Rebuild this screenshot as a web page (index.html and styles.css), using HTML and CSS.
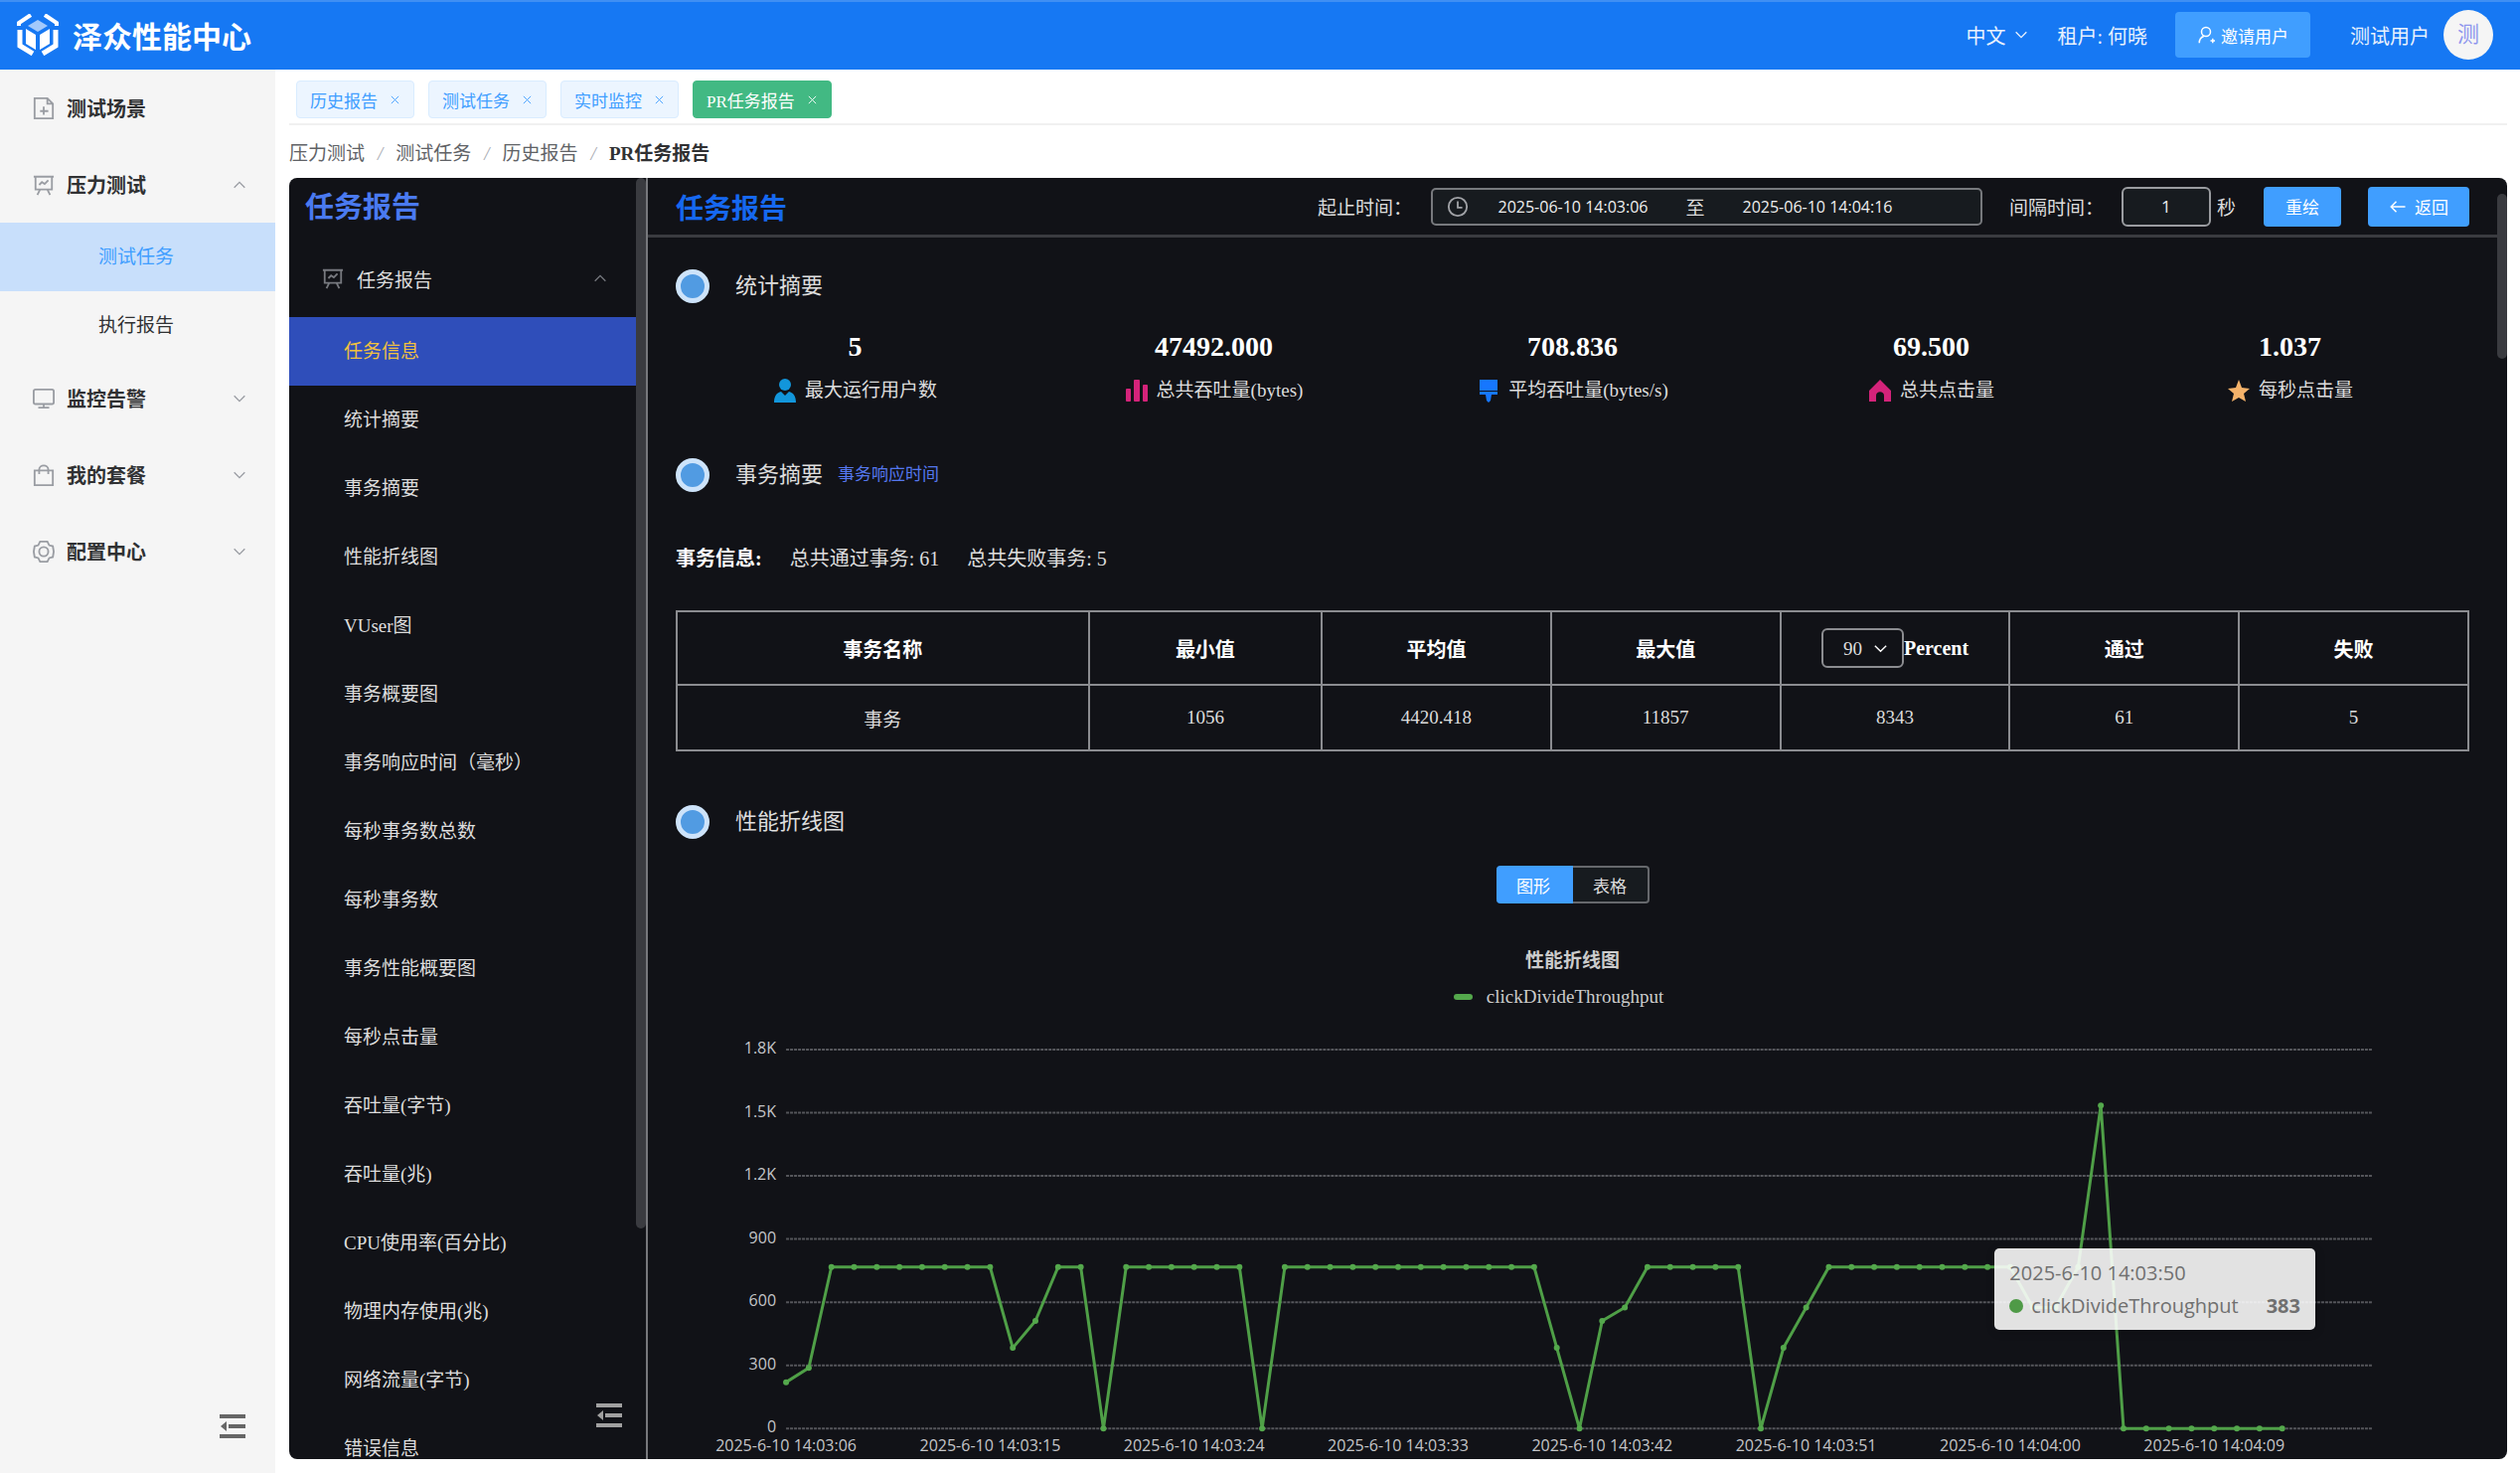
FILE: index.html
```html
<!DOCTYPE html>
<html lang="zh-CN">
<head>
  <meta charset="UTF-8">
  <title>泽众性能中心</title>
  <link rel="stylesheet" href="styles.css">
</head>
<body>

<!-- shared icons -->
<svg class="sprite" aria-hidden="true">
  <symbol id="i-board" viewBox="0 0 24 24">
    <path d="M1 3h22M3 3v14h18V3M8 17l-3 6M16 17l3 6M7 12l3-3 3 2 4-4"/>
  </symbol>
  <symbol id="i-down" viewBox="0 0 24 24"><path d="M4 8l8 8 8-8"/></symbol>
  <symbol id="i-up" viewBox="0 0 24 24"><path d="M4 16l8-8 8 8"/></symbol>
  <symbol id="i-close" viewBox="0 0 24 24"><path d="M4 4l16 16M20 4L4 20"/></symbol>
  <symbol id="i-fold" viewBox="0 0 26 24">
    <path d="M0 2h26M9 12h17M0 22h26" stroke-width="4"/>
    <path d="M7 7v10l-6-5z" fill="currentColor" stroke="none"/>
  </symbol>
</svg>

<header class="header">
  <a href="#" class="logo">
    <svg class="logo-icon" viewBox="0 0 42 42">
      <path d="M2 12V9L14 1M40 12V9L28 1" fill="none" stroke="#fff" stroke-width="4"/>
      <path d="M3 16v16l13 8M39 16v16l-13 8" fill="none" stroke="#fff" stroke-width="5"/>
      <path d="M21 6l10 6-10 6-10-6z" fill="#a3c9fb"/>
      <path d="M9 15l10 6v15l-10-6zM33 15l-10 6v15l10-6z" fill="#fff"/>
    </svg>
    <span>泽众性能中心</span>
  </a>
  <div class="header-right">
    <button type="button" class="lang">中文 <svg class="icon-sm"><use href="#i-down"/></svg></button>
    <span class="tenant">租户: 何晓</span>
    <button type="button" class="btn invite">
      <svg class="icon-btn" viewBox="0 0 24 24"><circle cx="12" cy="8" r="6"/><path d="M3 23c0-5 3-8 6-9M21 17v6M18 20h6"/></svg>
      邀请用户
    </button>
    <span>测试用户</span>
    <span class="avatar">测</span>
  </div>
</header>

<div class="layout">
  <nav class="sidebar">
    <a href="#" class="menu-item">
      <svg class="icon" viewBox="0 0 24 24"><path d="M2 1h14l6 6v16H2zM16 1v6h6M12 10v9M8 15h9"/></svg>
      <span>测试场景</span>
    </a>
    <a href="#" class="menu-item">
      <svg class="icon"><use href="#i-board"/></svg>
      <span>压力测试</span>
      <svg class="icon-sm arrow"><use href="#i-up"/></svg>
    </a>
    <a href="#" class="sub-item active">测试任务</a>
    <a href="#" class="sub-item">执行报告</a>
    <a href="#" class="menu-item">
      <svg class="icon" viewBox="0 0 24 24"><rect x="1" y="2" width="22" height="16" rx="2"/><path d="M12 18v4M6 22h12"/></svg>
      <span>监控告警</span>
      <svg class="icon-sm arrow"><use href="#i-down"/></svg>
    </a>
    <a href="#" class="menu-item">
      <svg class="icon" viewBox="0 0 24 24"><path d="M2 7h20v16H2zM7 11V6c0-6 10-6 10 0v5"/></svg>
      <span>我的套餐</span>
      <svg class="icon-sm arrow"><use href="#i-down"/></svg>
    </a>
    <a href="#" class="menu-item">
      <svg class="icon" viewBox="0 0 24 24"><path d="M8 1h8l2 4 4 1 1 6-1 6-4 1-2 4H8l-2-4-4-1-1-6 1-6 4-1z"/><circle cx="12" cy="12" r="5"/></svg>
      <span>配置中心</span>
      <svg class="icon-sm arrow"><use href="#i-down"/></svg>
    </a>
    <button type="button" class="fold" aria-label="收起菜单"><svg><use href="#i-fold"/></svg></button>
  </nav>

  <main class="content">
    <div class="tabs">
      <a href="#" class="tab">历史报告 <svg><use href="#i-close"/></svg></a>
      <a href="#" class="tab">测试任务 <svg><use href="#i-close"/></svg></a>
      <a href="#" class="tab">实时监控 <svg><use href="#i-close"/></svg></a>
      <a href="#" class="tab active">PR任务报告 <svg><use href="#i-close"/></svg></a>
    </div>
    <div class="breadcrumb">
      <a href="#">压力测试</a><i>/</i><a href="#">测试任务</a><i>/</i><a href="#">历史报告</a><i>/</i><b>PR任务报告</b>
    </div>

    <div class="panel">
      <aside class="report-menu">
        <h2>任务报告</h2>
        <a href="#" class="report-group">
          <svg class="icon"><use href="#i-board"/></svg>
          <span>任务报告</span>
          <svg class="icon-sm arrow"><use href="#i-up"/></svg>
        </a>
        <ul>
          <li class="active"><a href="#">任务信息</a></li>
          <li><a href="#">统计摘要</a></li>
          <li><a href="#">事务摘要</a></li>
          <li><a href="#">性能折线图</a></li>
          <li><a href="#">VUser图</a></li>
          <li><a href="#">事务概要图</a></li>
          <li><a href="#">事务响应时间（毫秒）</a></li>
          <li><a href="#">每秒事务数总数</a></li>
          <li><a href="#">每秒事务数</a></li>
          <li><a href="#">事务性能概要图</a></li>
          <li><a href="#">每秒点击量</a></li>
          <li><a href="#">吞吐量(字节)</a></li>
          <li><a href="#">吞吐量(兆)</a></li>
          <li><a href="#">CPU使用率(百分比)</a></li>
          <li><a href="#">物理内存使用(兆)</a></li>
          <li><a href="#">网络流量(字节)</a></li>
          <li><a href="#">错误信息</a></li>
        </ul>
        <div class="menu-scroll"></div>
        <button type="button" class="fold" aria-label="收起目录"><svg><use href="#i-fold"/></svg></button>
      </aside>

      <section class="report">
        <div class="report-head">
          <h1>任务报告</h1>
          <div class="filters">
            <label for="startTime">起止时间：</label>
            <div class="date-range">
              <svg class="icon-clock" viewBox="0 0 24 24"><circle cx="12" cy="12" r="10"/><path d="M12 6v7h5"/></svg>
              <input type="text" id="startTime" value="2025-06-10 14:03:06">
              <label for="endTime">至</label>
              <input type="text" id="endTime" value="2025-06-10 14:04:16">
            </div>
            <label for="interval" class="interval-label">间隔时间：</label>
            <input type="text" id="interval" class="interval" value="1">
            <span class="unit">秒</span>
            <button type="button" class="btn">重绘</button>
            <button type="button" class="btn back">
              <svg class="icon-btn" viewBox="0 0 24 24"><path d="M22 12H3M10 5l-7 7 7 7"/></svg>
              返回
            </button>
          </div>
        </div>

        <div class="report-body">
          <h3><span class="dot"></span>统计摘要</h3>
          <div class="stats">
            <div class="stat">
              <strong>5</strong>
              <span><svg class="cyan" viewBox="0 0 24 24"><circle cx="12" cy="6" r="6"/><path d="M1 24c0-7 3-10 7-11l4 4 4-4c4 1 7 4 7 11z"/></svg>最大运行用户数</span>
            </div>
            <div class="stat">
              <strong>47492.000</strong>
              <span><svg class="pink" viewBox="0 0 24 24"><rect x="1" y="10" width="5" height="13" rx="1"/><rect x="9" y="1" width="6" height="22" rx="1"/><rect x="18" y="6" width="5" height="17" rx="1"/></svg>总共吞吐量(bytes)</span>
            </div>
            <div class="stat">
              <strong>708.836</strong>
              <span><svg class="blue" viewBox="0 0 24 24"><path d="M3 1h18v11H3zM3 13h18v3h-6l-1 6-2 2-2-2-1-6H3z"/></svg>平均吞吐量(bytes/s)</span>
            </div>
            <div class="stat">
              <strong>69.500</strong>
              <span><svg class="pink" viewBox="0 0 24 24"><path d="M12 1l11 11v11h-7v-6c0-5-8-5-8 0v6H1V12z"/></svg>总共点击量</span>
            </div>
            <div class="stat">
              <strong>1.037</strong>
              <span><svg class="orange" viewBox="0 0 24 24"><path d="M12 1l3 8 8 1-6 5 2 8-7-4-7 4 2-8-6-5 8-1z"/></svg>每秒点击量</span>
            </div>
          </div>

          <h3><span class="dot"></span>事务摘要<a href="#">事务响应时间</a></h3>
          <p class="summary"><b>事务信息:</b><span>总共通过事务: 61</span><span>总共失败事务: 5</span></p>

          <table>
            <thead>
              <tr>
                <th class="name">事务名称</th>
                <th class="min">最小值</th>
                <th>平均值</th>
                <th>最大值</th>
                <th>
                  <div class="percent">
                    <div class="select">
                      <select id="percent">
                        <option>50</option>
                        <option selected>90</option>
                        <option>95</option>
                      </select>
                      <svg><use href="#i-down"/></svg>
                    </div>
                    <label for="percent">Percent</label>
                  </div>
                </th>
                <th>通过</th>
                <th>失败</th>
              </tr>
            </thead>
            <tbody>
              <tr>
                <td>事务</td>
                <td>1056</td>
                <td>4420.418</td>
                <td>11857</td>
                <td>8343</td>
                <td>61</td>
                <td>5</td>
              </tr>
            </tbody>
          </table>

          <h3><span class="dot"></span>性能折线图</h3>
          <div class="toggle">
            <button type="button" class="on">图形</button><button type="button">表格</button>
          </div>

          <div class="chart-title">性能折线图</div>
          <div class="legend"><i></i>clickDivideThroughput</div>
          <div class="chart">
            <svg id="chart" viewBox="0 0 1804 440"></svg>
            <div class="tooltip">
              <div>2025-6-10 14:03:50</div>
              <div class="tooltip-row"><i></i><span>clickDivideThroughput</span><b>383</b></div>
            </div>
          </div>
        </div>
        <div class="page-scroll"></div>
      </section>
    </div>
  </main>
</div>

<script src="script.js"></script>
</body>
</html>
```
FILE: styles.css
```css
* {
  box-sizing: border-box;
}
body {
  margin: 0;
  height: 100vh;
  display: flex;
  flex-direction: column;
  overflow: hidden;
  font-family: "Liberation Serif", "Noto Sans CJK SC", serif;
  font-size: 19px;
  background: #fff;
  color: #303133;
}
a {
  color: inherit;
  text-decoration: none;
}
button, input, select {
  font-family: inherit;
  font-size: 17px;
  cursor: pointer;
}
svg {
  fill: none;
  stroke: currentColor;
  stroke-width: 2;
  flex-shrink: 0;
}
.sprite {
  display: none;
}
.icon {
  width: 22px;
  height: 22px;
}
.icon-sm {
  width: 16px;
  height: 16px;
}
.icon-btn {
  width: 18px;
  height: 18px;
}

/* header */
.header {
  height: 70px;
  flex-shrink: 0;
  display: flex;
  justify-content: space-between;
  align-items: center;
  padding: 0 27px 2px 17px;
  background: #1678f3;
  border-top: 2px solid #3f8ff3;
  color: #fff;
}
.logo {
  display: flex;
  align-items: center;
  gap: 14px;
  font-family: "Noto Sans CJK SC", sans-serif;
  font-size: 30px;
  font-weight: bold;
}
.logo-icon {
  width: 42px;
  height: 42px;
  stroke: none;
}
.header-right {
  display: flex;
  align-items: center;
  color: #e8f1fd;
  font-size: 20px;
}
.lang {
  display: flex;
  align-items: center;
  gap: 8px;
  margin-right: 28px;
  padding: 0;
  background: none;
  border: none;
  color: inherit;
  font-size: 20px;
}
.btn {
  height: 40px;
  display: flex;
  align-items: center;
  justify-content: center;
  gap: 6px;
  padding: 0 22px;
  background: #409eff;
  border: none;
  border-radius: 4px;
  color: #fff;
}
.invite {
  height: 46px;
  margin: 0 40px 0 28px;
}
.avatar {
  width: 50px;
  height: 50px;
  margin-left: 14px;
  border-radius: 50%;
  background: #f5f5f5;
  color: #8f96ee;
  font-size: 22px;
  line-height: 50px;
  text-align: center;
}

/* left menu */
.layout {
  flex: 1;
  min-height: 0;
  display: flex;
}
.sidebar {
  position: relative;
  width: 277px;
  flex-shrink: 0;
  background: #f5f5f5;
}
.menu-item {
  height: 77px;
  display: flex;
  align-items: center;
  gap: 12px;
  padding: 0 28px 0 33px;
  font-size: 20px;
  font-weight: bold;
}
.menu-item .icon, .arrow {
  color: #9a9da3;
}
.arrow {
  margin-left: auto;
}
.sub-item {
  display: block;
  padding-left: 99px;
  line-height: 69px;
}
.sub-item.active {
  background: #c8dffb;
  color: #409eff;
}
.fold {
  position: absolute;
  right: 30px;
  bottom: 35px;
  padding: 0;
  background: none;
  border: none;
  color: #666;
}
.fold svg {
  display: block;
  width: 26px;
  height: 24px;
}

/* tabs and breadcrumb */
.content {
  flex: 1;
  min-width: 0;
  display: flex;
  flex-direction: column;
  padding: 0 13px 14px 14px;
}
.tabs {
  display: flex;
  gap: 14px;
  padding: 11px 7px 5px;
  border-bottom: 2px solid #f0f0f0;
}
.tab {
  height: 38px;
  display: flex;
  align-items: center;
  gap: 12px;
  padding: 0 13px;
  background: #ecf5ff;
  border: 1px solid #d9ecff;
  border-radius: 4px;
  color: #409eff;
  font-size: 17px;
}
.tab svg {
  width: 11px;
  height: 11px;
}
.tab.active {
  background: #42b983;
  border-color: #42b983;
  color: #fff;
}
.breadcrumb {
  display: flex;
  gap: 13px;
  height: 53px;
  line-height: 57px;
  color: #606266;
}
.breadcrumb i {
  color: #a8abb2;
}
.breadcrumb b {
  color: #303133;
}

/* dark report panel */
.panel {
  flex: 1;
  min-height: 0;
  display: flex;
  overflow: hidden;
  border-radius: 8px;
  background: #111217;
  color: #ddd;
}
.report-menu {
  position: relative;
  width: 361px;
  flex-shrink: 0;
  border-right: 2px solid #77787c;
}
.report-menu h2 {
  margin: 0;
  padding-left: 16px;
  color: #4a7af0;
  font-size: 29px;
  line-height: 60px;
}
.report-group {
  height: 80px;
  display: flex;
  align-items: center;
  gap: 13px;
  padding: 2px 38px 0 33px;
}
.report-group .icon, .report-group .arrow {
  color: #77797f;
}
.report-menu ul {
  margin: 0 10px 0 0;
  padding: 0;
  list-style: none;
}
.report-menu li a {
  display: block;
  padding-left: 55px;
  line-height: 69px;
}
.report-menu li.active {
  background: #2f4eba;
  color: #f0c040;
}
.menu-scroll {
  position: absolute;
  top: 0;
  right: 0;
  width: 10px;
  height: 82%;
  border-radius: 5px;
  background: #3a3b40;
}
.report-menu .fold {
  right: 24px;
  bottom: 32px;
  color: #a0a0a0;
}
.report {
  position: relative;
  flex: 1;
  min-width: 0;
}
.page-scroll {
  position: absolute;
  top: 16px;
  right: 0;
  width: 10px;
  height: 166px;
  border-radius: 5px;
  background: #3a3b40;
}
.report-head {
  height: 60px;
  display: flex;
  align-items: center;
  justify-content: space-between;
  margin-right: 10px;
  padding: 0 28px;
  border-bottom: 3px solid #3a3b40;
}
.report-head h1 {
  margin: 0;
  color: #1668f0;
  font-size: 28px;
}
.filters {
  display: flex;
  align-items: center;
}
.date-range {
  width: 555px;
  height: 38px;
  display: flex;
  align-items: center;
  margin: 0 27px 0 19px;
  padding-left: 14px;
  background: #171b1f;
  border: 2px solid #77797d;
  border-radius: 5px;
}
.icon-clock {
  width: 22px;
  height: 22px;
  color: #a0a2a6;
}
.date-range input {
  width: 210px;
  padding: 0;
  background: none;
  border: none;
  color: #eee;
  font-family: "Open Sans", sans-serif;
  font-size: 16px;
  text-align: center;
}
.date-range label {
  width: 36px;
  text-align: center;
}
.interval {
  width: 90px;
  height: 40px;
  margin: 0 6px 0 18px;
  background: #171b1f;
  border: 2px solid #9a9ca0;
  border-radius: 6px;
  color: #eee;
  font-family: "Open Sans", sans-serif;
  text-align: center;
}
.unit {
  margin-right: 28px;
}
.back {
  margin-left: 27px;
  padding: 0 21px;
  gap: 8px;
}

.report-body {
  padding: 32px 38px 0 28px;
}
h3 {
  display: flex;
  align-items: center;
  margin: 0;
  font-size: 22px;
  font-weight: normal;
  line-height: 34px;
}
h3 a {
  margin-left: 15px;
  color: #5577ee;
  font-size: 17px;
}
.dot {
  width: 34px;
  height: 34px;
  margin-right: 26px;
  border: 5px solid #cde3fa;
  border-radius: 50%;
  background: #519be2;
}
.stats {
  display: grid;
  grid-template-columns: repeat(5, 1fr);
  padding: 24px 0 44px;
}
.stat {
  text-align: center;
}
.stat strong {
  display: block;
  color: #fff;
  font-size: 28px;
  line-height: 40px;
}
.stat span {
  display: flex;
  align-items: center;
  justify-content: center;
  gap: 8px;
  line-height: 48px;
}
.stat svg {
  width: 24px;
  height: 24px;
  stroke: none;
}
.cyan {
  fill: #1296db;
}
.pink {
  fill: #d4237a;
}
.blue {
  fill: #1677ff;
}
.orange {
  fill: #f4b26a;
}
.summary {
  display: flex;
  gap: 28px;
  margin: 0;
  padding: 53px 0 38px;
  font-size: 20px;
  line-height: 28px;
}
.summary b {
  color: #fff;
}
table {
  width: 100%;
  margin-bottom: 54px;
  border-collapse: collapse;
  table-layout: fixed;
}
th, td {
  height: 66px;
  padding: 0;
  border: 2px solid #8b8c90;
  text-align: center;
}
th {
  height: 74px;
  color: #fff;
  font-size: 20px;
}
th.name {
  width: 23%;
}
th.min {
  width: 13%;
}
.percent {
  display: flex;
  align-items: center;
  justify-content: center;
}
.select {
  position: relative;
}
.select select {
  width: 83px;
  height: 40px;
  padding-left: 20px;
  appearance: none;
  background: #111217;
  border: 2px solid #8b8c90;
  border-radius: 6px;
  color: #ddd;
  font-size: 19px;
}
.select svg {
  position: absolute;
  top: 12px;
  right: 15px;
  width: 17px;
  height: 17px;
  pointer-events: none;
}
.toggle {
  display: flex;
  justify-content: center;
  padding: 27px 0 44px;
}
.toggle button {
  width: 77px;
  height: 38px;
  padding: 0;
  background: #171b1f;
  border: 2px solid #66686c;
  border-left: none;
  border-radius: 0 4px 4px 0;
  color: #ddd;
}
.toggle .on {
  background: #409eff;
  border-color: #409eff;
  border-radius: 4px 0 0 4px;
  color: #fff;
}

/* chart */
.chart-title {
  font-weight: bold;
  color: #ccc;
  line-height: 28px;
  text-align: center;
}
.legend {
  display: flex;
  align-items: center;
  justify-content: center;
  gap: 14px;
  padding-right: 28px;
  color: #ccc;
  line-height: 44px;
}
.legend i {
  width: 19px;
  height: 6px;
  border-radius: 3px;
  background: #54a84c;
}
.chart {
  position: relative;
}
.chart > svg {
  display: block;
  width: 100%;
  stroke-width: 1;
}
.chart text {
  fill: #c4c5c8;
  stroke: none;
  font-family: "Open Sans", sans-serif;
  font-size: 16px;
}
.grid-line {
  stroke: #55565b;
  stroke-width: 2;
  stroke-dasharray: 3 1;
}
.series {
  stroke: #4f9f47;
  stroke-width: 3;
}
.point {
  fill: #54a84c;
  stroke: none;
}
.tooltip {
  position: absolute;
  top: 231px;
  right: 155px;
  padding: 8px 15px;
  border-radius: 5px;
  background: rgba(255, 255, 255, 0.88);
  box-shadow: 1px 2px 10px rgba(0, 0, 0, 0.2);
  color: #707070;
  font-family: "Open Sans", sans-serif;
  font-size: 20px;
  line-height: 33px;
}
.tooltip-row {
  display: flex;
  align-items: center;
}
.tooltip-row i {
  width: 14px;
  height: 14px;
  margin-right: 8px;
  border-radius: 50%;
  background: #4f9a47;
}
.tooltip-row b {
  margin-left: 28px;
}
```
FILE: script.js
```javascript
// clickDivideThroughput, one value per second from 14:03:06
const values = [
  220, 288, 767, 767, 767, 767, 767, 767, 767, 767, 383, 511, 767, 767, 0,
  767, 767, 767, 767, 767, 767, 0,
  767, 767, 767, 767, 767, 767, 767, 767, 767, 767, 767, 767, 383, 0,
  511, 575, 767, 767, 767, 767, 767, 0,
  383, 575, 767, 767, 767, 767, 767, 767, 767, 767, 767, 575, 575, 767, 1535,
  0, 0, 0, 0, 0, 0, 0, 0
];
const xLabels = ['14:03:06', '14:03:15', '14:03:24', '14:03:33', '14:03:42', '14:03:51', '14:04:00', '14:04:09'];
const yLabels = ['0', '300', '600', '900', '1.2K', '1.5K', '1.8K'];

const left = 111;
const right = 1707;
const bottom = 412;
const rowHeight = 63.5;
const step = (right - left) / 70;

const x = i => left + i * step;
const y = v => bottom - v / 300 * rowHeight;

let html = '';
yLabels.forEach((label, i) => {
  const lineY = y(i * 300);
  html += `<line class="grid-line" x1="${left}" x2="${right}" y1="${lineY}" y2="${lineY}"/>`;
  html += `<text x="${left - 10}" y="${lineY + 4}" text-anchor="end">${label}</text>`;
});
xLabels.forEach((label, i) => {
  html += `<text x="${x(i * 9)}" y="${bottom + 23}" text-anchor="middle">2025-6-10 ${label}</text>`;
});
html += `<polyline class="series" points="${values.map((v, i) => x(i) + ',' + y(v)).join(' ')}"/>`;
values.forEach((v, i) => {
  html += `<circle class="point" cx="${x(i)}" cy="${y(v)}" r="3"/>`;
});
document.getElementById('chart').innerHTML = html;
```
